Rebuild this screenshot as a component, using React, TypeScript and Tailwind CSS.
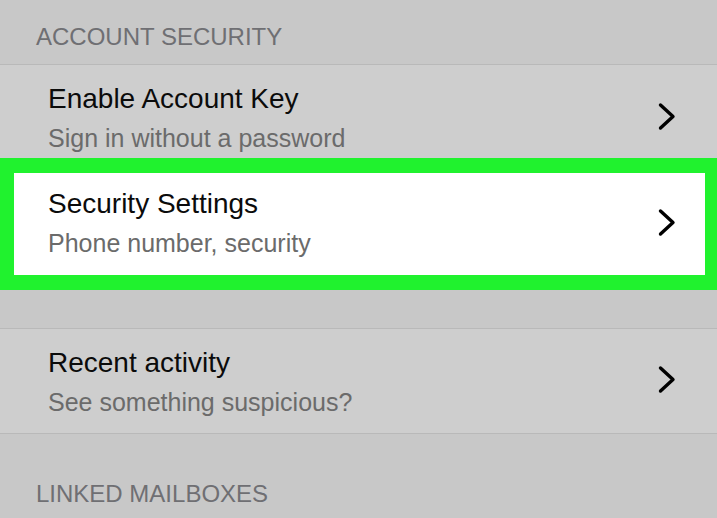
import React from 'react';

interface RowProps {
  title: string;
  subtitle: string;
  chevronTop: string;
  className: string;
}

// chevron drawn like the iOS disclosure indicator
function Chevron({ top }: { top: string }) {
  return (
    <svg width="24" height="32" viewBox="0 0 24 32" className={`shrink-0 ${top}`}>
      <path d="M4.5 5 L17 16.5 L4.5 28" fill="none" stroke="#000" strokeWidth="3.4" strokeLinecap="round" strokeLinejoin="round" />
    </svg>
  );
}

function Row({ title, subtitle, chevronTop, className }: RowProps) {
  return (
    <div className={`flex items-start overflow-hidden ${className}`}>
      <div className="flex-1">
        <div className="text-[28px] leading-[34px] text-[#0b0b0b]">{title}</div>
        <div className="mt-[7px] text-[25px] leading-[30px] text-[#6b6b6b]">{subtitle}</div>
      </div>
      <Chevron top={chevronTop} />
    </div>
  );
}

export default function App() {
  return (
    <div
      className="w-[717px] h-[518px] overflow-hidden bg-[#c8c8c8]"
      style={{ fontFamily: '"Liberation Sans", Arial, sans-serif' }}
    >
      {/* section header */}
      <div className="h-[64px] pl-[36px] pt-[23px] text-[24px] leading-[28px] text-[#6f6f73]">ACCOUNT SECURITY</div>
      <div className="h-px bg-[#b9b9b9]" />

      <Row
        title="Enable Account Key"
        subtitle="Sign in without a password"
        chevronTop="mt-[18px]"
        className="h-[93px] bg-[#cecece] pl-[48px] pt-[17px] pr-[37px]"
      />

      {/* highlighted row */}
      <div className="h-[132px] bg-[#20f22e] pt-[15px] pl-[14px] pr-[12px]">
        <Row
          title="Security Settings"
          subtitle="Phone number, security"
          chevronTop="mt-[19px]"
          className="h-[102px] bg-white pl-[34px] pt-[14px] pr-[25px]"
        />
      </div>

      <div className="h-[38px]" />
      <div className="h-px bg-[#b9b9b9]" />
      <Row
        title="Recent activity"
        subtitle="See something suspicious?"
        chevronTop="mt-[17px]"
        className="h-[104px] bg-[#cecece] pl-[48px] pt-[17px] pr-[37px]"
      />
      <div className="h-px bg-[#b9b9b9]" />

      <div className="pl-[36px] pt-[46px] text-[24px] leading-[28px] text-[#6f6f73]">LINKED MAILBOXES</div>
    </div>
  );
}
